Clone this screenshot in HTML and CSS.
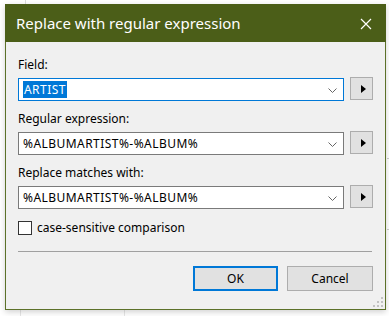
FILE: index.html
```html
<!DOCTYPE html>
<html lang="en">
<head>
  <meta charset="UTF-8">
  <title>Replace with regular expression</title>
  <link rel="stylesheet" href="styles.css">
</head>
<body>
  <div class="dialog">
    <div class="titlebar">
      <span class="title">Replace with regular expression</span>
      <svg class="close" width="12" height="12" viewBox="0 0 12 12">
        <path d="M1 1 L11 11 M11 1 L1 11" stroke="#fff" stroke-width="1.2" fill="none"/>
      </svg>
    </div>

    <div class="content">
      <div class="group first">
        <div class="label">Field:</div>
        <div class="row">
          <div class="combo focused">
            <span class="value"><span class="selected">ARTIST</span></span>
            <svg class="chevron" width="9" height="5" viewBox="0 0 9 5"><path d="M0.5 0.5 L4.5 4.5 L8.5 0.5" stroke="#666" fill="none"/></svg>
          </div>
          <button class="arrow-btn"><span class="tri"></span></button>
        </div>
      </div>

      <div class="group">
        <div class="label">Regular expression:</div>
        <div class="row">
          <div class="combo">
            <span class="value">%ALBUMARTIST%-%ALBUM%</span>
            <svg class="chevron" width="9" height="5" viewBox="0 0 9 5"><path d="M0.5 0.5 L4.5 4.5 L8.5 0.5" stroke="#666" fill="none"/></svg>
          </div>
          <button class="arrow-btn"><span class="tri"></span></button>
        </div>
      </div>

      <div class="group">
        <div class="label">Replace matches with:</div>
        <div class="row">
          <div class="combo">
            <span class="value">%ALBUMARTIST%-%ALBUM%</span>
            <svg class="chevron" width="9" height="5" viewBox="0 0 9 5"><path d="M0.5 0.5 L4.5 4.5 L8.5 0.5" stroke="#666" fill="none"/></svg>
          </div>
          <button class="arrow-btn"><span class="tri"></span></button>
        </div>
      </div>

      <label class="check">
        <span class="box"></span>
        <span>case-sensitive comparison</span>
      </label>

      <div class="separator"></div>

      <div class="buttons">
        <button class="btn default">OK</button>
        <button class="btn">Cancel</button>
      </div>

      <svg class="grip" width="12" height="12" viewBox="0 0 12 12">
        <rect x="9" y="1" width="2" height="2" fill="#c2c2c2"/>
        <rect x="5" y="5" width="2" height="2" fill="#c2c2c2"/>
        <rect x="9" y="5" width="2" height="2" fill="#c2c2c2"/>
        <rect x="1" y="9" width="2" height="2" fill="#c2c2c2"/>
        <rect x="5" y="9" width="2" height="2" fill="#c2c2c2"/>
        <rect x="9" y="9" width="2" height="2" fill="#c2c2c2"/>
      </svg>
    </div>
  </div>
</body>
</html>
```

FILE: styles.css
```css
body {
  margin: 0;
  padding: 4px 0 0 5px;
  width: 389px;
  height: 316px;
  box-sizing: border-box;
  overflow: hidden;
  font-family: "Noto Sans", sans-serif;
  font-size: 12px;
  color: #000;
  background:
    linear-gradient(#dcdcdc, #dcdcdc) 25px 0 / 1px 5px no-repeat,
    linear-gradient(#e6e6e6, #e6e6e6) 20px 310px / 1px 6px no-repeat,
    linear-gradient(#e6e6e6, #e6e6e6) 124px 310px / 1px 6px no-repeat,
    linear-gradient(#cfcfcf, #cfcfcf) 387px 158px / 2px 1px no-repeat,
    linear-gradient(#cfcfcf, #cfcfcf) 387px 229px / 2px 1px no-repeat,
    #fff;
}

.dialog {
  width: 381px;
  height: 306px;
  box-sizing: border-box;
  border: 1px solid #5c7129;
  border-top: none;
  background: #f0f0f0;
  display: flex;
  flex-direction: column;
  box-shadow: 0 2px 6px rgba(0, 0, 0, 0.18);
}

.titlebar {
  height: 38px;
  margin: 0 -1px;
  background: #4b5e18;
  color: #fff;
  display: flex;
  align-items: center;
  justify-content: space-between;
  padding: 0 14px 0 11px;
  flex-shrink: 0;
}

.title { font-size: 15px; }

.close { margin-top: 1px; }

.content {
  position: relative;
  flex: 1;
  padding: 12px 12px 0 12px;
  display: flex;
  flex-direction: column;
}

.group { margin-top: 10px; }
.group.first { margin-top: 3px; }

.label { line-height: 16px; margin-bottom: 5px; }

.row { display: flex; gap: 6px; align-items: flex-start; }

.combo {
  width: 326px;
  height: 23px;
  box-sizing: border-box;
  border: 1px solid #7a7a7a;
  background: #fff;
  display: flex;
  align-items: center;
  justify-content: space-between;
  padding: 0 6px 0 4px;
}
.combo.focused { border-color: #0078d7; }

.value { line-height: 15px; letter-spacing: 0.45px; }
.selected { background: #0078d7; color: #fff; padding: 0 1px; }

.chevron { margin-top: 1px; }

.arrow-btn {
  width: 23px;
  height: 23px;
  margin-top: -1px;
  box-sizing: border-box;
  border: 1px solid #adadad;
  background: #e1e1e1;
  padding: 0 0 0 3px;
  display: flex;
  align-items: center;
  justify-content: center;
}
.tri {
  width: 0;
  height: 0;
  border-left: 5px solid #000;
  border-top: 4.5px solid transparent;
  border-bottom: 4.5px solid transparent;
}

.check {
  display: flex;
  align-items: center;
  gap: 5px;
  margin-top: 11px;
  line-height: 16px;
}
.box {
  width: 14px;
  height: 14px;
  box-sizing: border-box;
  border: 1px solid #333;
  background: #fff;
}

.separator {
  height: 1px;
  background: #a0a0a0;
  margin: 15px 1px 0 0;
}

.buttons {
  display: flex;
  justify-content: flex-end;
  gap: 9px;
  margin-top: 14px;
}

.btn {
  width: 86px;
  height: 25px;
  box-sizing: border-box;
  border: 1px solid #adadad;
  background: #e1e1e1;
  font-family: "Noto Sans", sans-serif;
  font-size: 12px;
  color: #000;
  padding: 0;
}
.btn.default { width: 85px; border: 2px solid #0078d7; }

.grip { position: absolute; right: 1px; bottom: 1px; }
```
